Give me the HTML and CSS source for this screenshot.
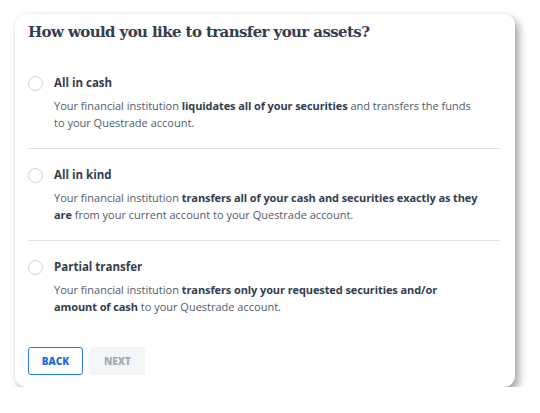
FILE: index.html
```html
<!DOCTYPE html>
<html>
<head>
<meta charset="utf-8">
<link rel="stylesheet" href="styles.css">
</head>
<body>
<div class="card">
  <h1 class="title">How would you like to transfer your assets?</h1>
  <div class="options">
    <div class="option">
      <span class="radio"></span>
      <div class="text">
        <div class="label">All in cash</div>
        <p class="desc">Your financial institution <b>liquidates all of your securities</b> and transfers the funds to your Questrade account.</p>
      </div>
    </div>
    <div class="option">
      <span class="radio"></span>
      <div class="text">
        <div class="label">All in kind</div>
        <p class="desc">Your financial institution <b>transfers all of your cash and securities exactly as they are</b> from your current account to your Questrade account.</p>
      </div>
    </div>
    <div class="option">
      <span class="radio"></span>
      <div class="text">
        <div class="label">Partial transfer</div>
        <p class="desc">Your financial institution <b>transfers only your requested securities and/or amount of cash</b> to your Questrade account.</p>
      </div>
    </div>
  </div>
  <div class="actions">
    <button class="btn btn-back">BACK</button>
    <button class="btn btn-next">NEXT</button>
  </div>
</div>
</body>
</html>
```
FILE: styles.css
```css
html, body { margin: 0; padding: 0; background: #ffffff; }
body { padding: 14px 25px 0 15px; font-family: "Open Sans", "Noto Sans", sans-serif; }
.card {
  width: 500px;
  height: 373px;
  box-sizing: border-box;
  background: #fff;
  border-radius: 11px;
  box-shadow: 4px 5px 8px rgba(0,0,0,0.35), 0 0 3px rgba(0,0,0,0.08);
  padding: 7px 15px 0 13px;
}
.title {
  margin: 0;
  font-family: "DejaVu Serif", serif;
  font-weight: bold;
  font-size: 15px;
  color: #333d4d;
  line-height: 22px;
  letter-spacing: -0.6px;
}
.options { margin-top: 31px; }
.option {
  display: flex;
  gap: 11px;
  padding: 17px 0 17px;
  border-bottom: 1px solid #dde3ea;
}
.option:first-child { padding-top: 0; }
.option:last-child { border-bottom: none; }
.radio {
  flex: none;
  width: 13px;
  height: 13px;
  border: 1px solid #ccd3dc;
  border-radius: 50%;
  margin-top: 2px;
}
.text { max-width: 426px; }
.label {
  font-size: 11.5px;
  font-weight: 700;
  color: #333d4d;
  line-height: 18px;
}
.desc {
  margin: 5px 0 0;
  font-size: 11px;
  line-height: 17px;
  color: #505b6a;
}
.desc b { font-weight: 700; color: #333d4d; letter-spacing: -0.1px; }
.actions { display: flex; gap: 7px; margin-top: 15px; }
.btn {
  width: 55px;
  height: 28px;
  font-family: "Open Sans", sans-serif;
  font-weight: 800;
  font-size: 10px;
  border-radius: 3px;
  padding: 0;
}
.btn-back { background: #fff; border: 1px solid #2a7be4; color: #1f6fd6; }
.btn-next { background: #f4f5f7; border: 1px solid #f4f5f7; color: #a4abb6; }
```
